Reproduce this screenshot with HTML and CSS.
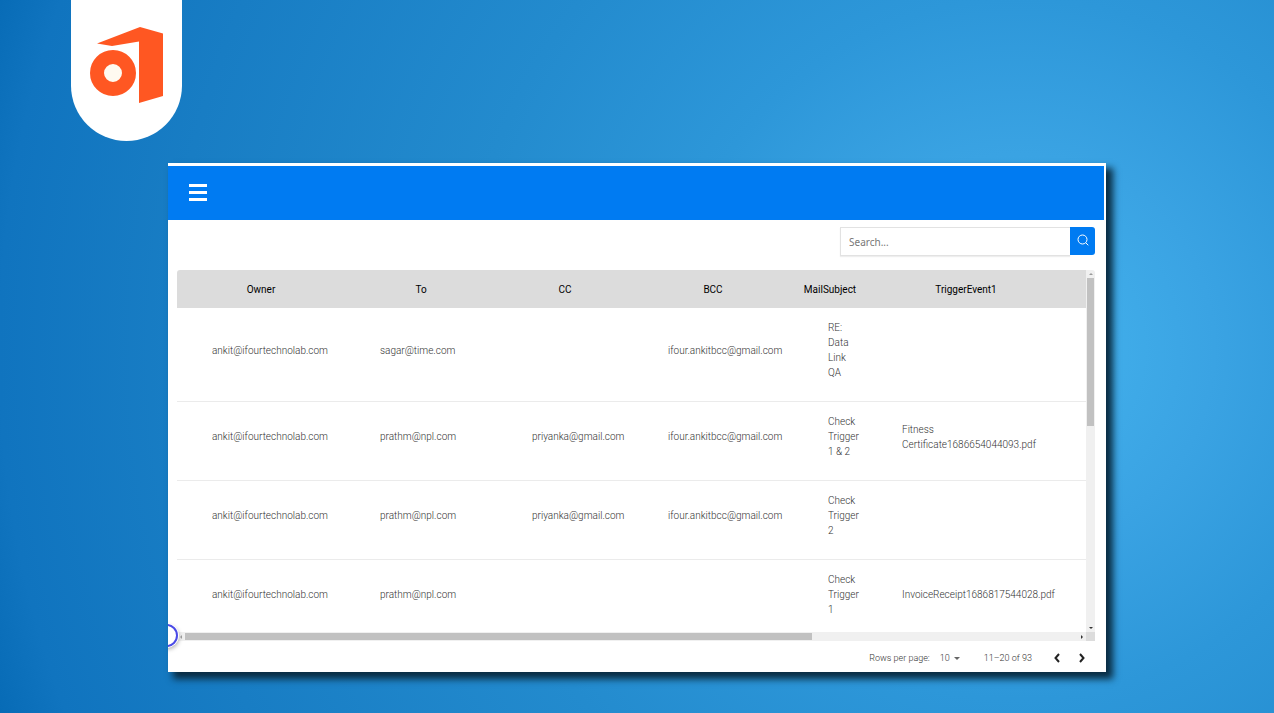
FILE: index.html
```html
<!DOCTYPE html>
<html lang="en">

<head>
    <meta charset="UTF-8">
    <meta name="viewport" content="width=device-width, initial-scale=1.0">
    <title>Mail Triggers</title>
    <link rel="stylesheet" href="styles.css">
</head>

<body>
    <div class="logo-tab">
        <svg class="logo" viewBox="0 0 74 78" role="img" aria-label="Logo">
            <path fill="#ff5722" d="M7 17.500 50 1l23 6.500V70l-24 7V15.500L22 20z" />
            <circle cx="23" cy="47" r="16" fill="#fffaf0" stroke="#ff5722" stroke-width="14" />
        </svg>
    </div>

    <main class="panel">
        <header class="navbar">
            <button class="menu-btn" aria-label="Menu">
                <span></span>
                <span></span>
                <span></span>
            </button>
        </header>

        <form class="search">
            <input type="text" placeholder="Search..." aria-label="Search">
            <button type="button" aria-label="Search">
                <svg viewBox="0 0 12 12" width="12" height="12" fill="none" stroke="#fff">
                    <circle cx="5.5" cy="5.5" r="4.5" />
                    <path d="M8.7 8.7 11.3 11.3" />
                </svg>
            </button>
        </form>

        <div class="grid">
            <div class="table-view">
                <table>
                    <colgroup>
                        <col class="col-owner">
                        <col class="col-to">
                        <col class="col-cc">
                        <col class="col-bcc">
                        <col class="col-subject">
                        <col class="col-event">
                        <col>
                    </colgroup>
                    <thead>
                        <tr>
                            <th>Owner</th>
                            <th>To</th>
                            <th>CC</th>
                            <th>BCC</th>
                            <th>MailSubject</th>
                            <th>TriggerEvent1</th>
                            <th></th>
                        </tr>
                    </thead>
                    <tbody>
                        <tr>
                            <td>ankit@ifourtechnolab.com</td>
                            <td>sagar@time.com</td>
                            <td></td>
                            <td>ifour.ankitbcc@gmail.com</td>
                            <td>RE: Data Link QA</td>
                            <td></td>
                            <td></td>
                        </tr>
                        <tr>
                            <td>ankit@ifourtechnolab.com</td>
                            <td>prathm@npl.com</td>
                            <td>priyanka@gmail.com</td>
                            <td>ifour.ankitbcc@gmail.com</td>
                            <td>Check Trigger 1 &amp; 2</td>
                            <td>Fitness Certificate1686654044093.pdf</td>
                            <td></td>
                        </tr>
                        <tr>
                            <td>ankit@ifourtechnolab.com</td>
                            <td>prathm@npl.com</td>
                            <td>priyanka@gmail.com</td>
                            <td>ifour.ankitbcc@gmail.com</td>
                            <td>Check Trigger 2</td>
                            <td></td>
                            <td></td>
                        </tr>
                        <tr>
                            <td>ankit@ifourtechnolab.com</td>
                            <td>prathm@npl.com</td>
                            <td></td>
                            <td></td>
                            <td>Check Trigger 1</td>
                            <td>InvoiceReceipt1686817544028.pdf</td>
                            <td></td>
                        </tr>
                    </tbody>
                </table>
            </div>
            <div class="bar bar-y">
                <i class="arrow up"></i>
                <div class="thumb"></div>
                <i class="arrow down"></i>
            </div>
            <div class="bar bar-x">
                <i class="arrow left"></i>
                <div class="thumb"></div>
                <i class="arrow right"></i>
            </div>
            <div class="corner"></div>
        </div>

        <footer class="pager">
            <label for="rows">Rows per page:</label>
            <div class="select">
                <select id="rows">
                    <option>10</option>
                </select>
            </div>
            <span class="range">11–20 of 93</span>
            <button aria-label="Previous page">
                <svg viewBox="0 0 6 10" width="6" height="10" fill="none" stroke="#222" stroke-width="2">
                    <path d="M5 1 1.5 5 5 9" />
                </svg>
            </button>
            <button aria-label="Next page">
                <svg viewBox="0 0 6 10" width="6" height="10" fill="none" stroke="#222" stroke-width="2">
                    <path d="M1 1 4.5 5 1 9" />
                </svg>
            </button>
        </footer>

        <button class="float-btn" aria-label="Open widget"></button>
    </main>
</body>

</html>
```

FILE: styles.css
```css
* {
    box-sizing: border-box;
}

body {
    margin: 0;
    min-height: 100vh;
    font-family: Roboto, sans-serif;
    font-size: 10px;
    color: #333;
    background: radial-gradient(circle at 80% 49%, #45b4ee 0, #3aa3e3 195px, #2d97d9 350px, #238bce 560px, #187dc4 850px, #1074bf 1020px, #066ab5 1090px);
}

button {
    padding: 0;
    border: none;
    background: none;
    cursor: pointer;
}

/* Logo */
.logo-tab {
    display: flex;
    justify-content: center;
    width: 111px;
    height: 141px;
    margin-left: 71px;
    padding-top: 26px;
    background: #fff;
    border-radius: 0 0 56px 56px;
}

.logo {
    width: 74px;
    height: 78px;
}

/* Panel */
.panel {
    position: relative;
    margin: 22px 168px 0;
    overflow: hidden;
    background: #fff;
    border-top: 3px solid #fff;
    border-right: 2px solid #fff;
    box-shadow: 6px 6px 7px 1px #0a2c42;
}

.navbar {
    display: flex;
    align-items: center;
    height: 54px;
    padding: 0 21px 1px;
    background: #007bf2;
}

.menu-btn {
    display: flex;
    flex-direction: column;
    gap: 4px;
    width: 18px;
}

.menu-btn span {
    height: 3px;
    background: #fff;
}

.search {
    display: flex;
    justify-content: flex-end;
    padding: 7px 9px 14px;
}

.search input {
    width: 230px;
    height: 29px;
    padding: 0 8px;
    border: 1px solid #e2e2e2;
    border-right: none;
    outline: none;
    font-family: "Noto Sans", sans-serif;
    font-size: 10px;
    box-shadow: 0 1px 1px #eee;
}

.search input::placeholder {
    color: #777;
}

.search button {
    width: 25px;
    height: 28px;
    background: #007bf2;
    border-radius: 0 3px 3px 0;
}

/* Table */
.grid {
    display: grid;
    grid-template-columns: 1fr 9px;
    grid-template-rows: 362px 9px;
    margin: 0 9px;
    border-radius: 3px 3px 0 0;
    overflow: hidden;
}

.table-view {
    overflow: hidden;
}

table {
    width: 100%;
    table-layout: fixed;
    border-collapse: separate;
    border-spacing: 0;
}

.col-owner {
    width: 168px;
}

.col-to {
    width: 152px;
}

.col-cc {
    width: 136px;
}

.col-bcc {
    width: 160px;
}

.col-subject {
    width: 74px;
}

.col-event {
    width: 198px;
}

th {
    height: 38px;
    padding: 0;
    background: #dcdcdc;
    font-weight: 400;
    color: #000;
}

td {
    padding: 12px 7px 21px 35px;
    border-bottom: 1px solid #ebebeb;
    font-weight: 300;
    line-height: 15px;
}

/* Scrollbars */
.bar {
    display: flex;
    align-items: center;
    background: #f0f0f0;
}

.bar-y {
    flex-direction: column;
}

.bar .thumb {
    background: #c1c1c1;
}

.bar-y .thumb {
    width: 7px;
    height: 41%;
}

.bar-x .thumb {
    width: 69%;
    height: 7px;
}

.arrow {
    width: 0;
    height: 0;
    margin: 3px;
    border: 2px solid transparent;
}

.up {
    border-top: none;
    border-bottom-color: #999;
}

.down {
    margin-top: auto;
    border-bottom: none;
    border-top-color: #333;
}

.left {
    border-left: none;
    border-right-color: #999;
}

.right {
    margin-left: auto;
    border-right: none;
    border-left-color: #333;
}

.corner {
    background: #dcdcdc;
}

/* Pager */
.pager {
    display: flex;
    align-items: center;
    justify-content: flex-end;
    height: 31px;
    padding: 3px 14px 0 0;
    font-size: 9px;
    font-weight: 300;
}

.select {
    display: flex;
    align-items: center;
    width: 20px;
    margin: 0 24px 0 10px;
}

.select select {
    width: 14px;
    padding: 0;
    border: none;
    appearance: none;
    background: none;
    font: inherit;
    color: inherit;
}

.select::after {
    content: "";
    border: 3px solid transparent;
    border-top-color: #666;
    border-bottom: none;
}

.pager button {
    display: flex;
    justify-content: center;
    width: 17px;
}

.range {
    margin-right: 16px;
}

.pager button + button {
    margin-left: 8px;
}

.float-btn {
    position: absolute;
    left: -13px;
    bottom: 25px;
    width: 23px;
    height: 23px;
    border: 2px solid #4a4ae6;
    border-radius: 50%;
    background: #fff;
    box-shadow: 0 0 0 1px #fff, 1px 2px 4px #aaa;
}
```
